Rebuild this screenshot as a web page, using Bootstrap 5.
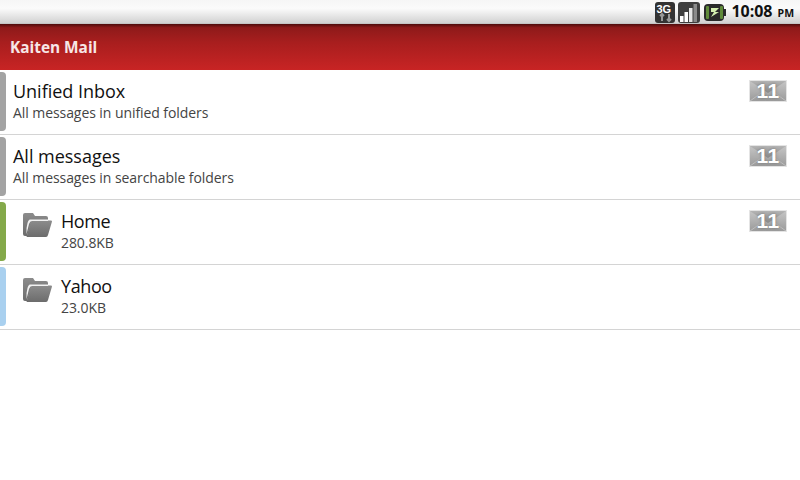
<!DOCTYPE html>
<html lang="en"><head><meta charset="utf-8"><title>Kaiten Mail</title>
<link href="https://cdn.jsdelivr.net/npm/bootstrap@5.3.0/dist/css/bootstrap.min.css" rel="stylesheet">
<style>
html,body{width:800px;height:480px;overflow:hidden;background:#fff;margin:0}
body{font-family:"Open Sans","Noto Sans","Liberation Sans",sans-serif;color:#111}
.statusbar{height:24px;background:linear-gradient(#f6f6f6,#fbfbfb 35%,#d2d2d2 95%,#bbb);padding-right:6px}
.clock{font:700 16px/24px "Open Sans",sans-serif;color:#111;margin-left:2px;white-space:nowrap;letter-spacing:-.03px}
.clock span{font-size:10.5px;margin-left:1px}
.titlebar{height:46px;background:linear-gradient(#4e0c0c 0,#8e1a1a 8%,#a81e1e 40%,#c82424 100%);color:#f7e6e6;font:700 15.4px/47px "Open Sans",sans-serif;padding-left:10px}
.folderrow{height:65px;border-bottom:1px solid #d4d4d4;position:relative}
.chip{width:6px;height:59px;margin-top:2px;border-radius:0 4px 4px 0;flex:none}
.chip-grey{background:#a3a3a3}.chip-green{background:#84a94a}.chip-blue{background:#a9d0ef}
.ftitle{font-size:18px;line-height:24px;color:#111;letter-spacing:-.02px}
.fsub{font-size:14px;line-height:18px;color:#444;padding-top:1px;letter-spacing:-.07px}
.ftext{padding-left:7px;padding-top:9px}
.ftext-indent{padding-left:55px}
.ftitle-narrow{letter-spacing:-.4px}
.folderico{left:22px;top:11px}
.countbadge{right:13px;top:10px;width:38px;height:22px}
.countbadge svg{display:block}
.countbadge b{font:700 21px/22px "Liberation Sans",sans-serif;color:#fff;text-shadow:0 0 3px #777;left:0;right:0;top:0;text-align:center;position:absolute;letter-spacing:.5px}
.stat-ico{gap:3px}
.batt{margin-left:1px}
</style></head><body>
<svg width="0" height="0" class="position-absolute"><defs>
<linearGradient id="envg" x1="0" y1="0" x2="0" y2="1"><stop offset="0" stop-color="#c6c6c6"/><stop offset="1" stop-color="#9a9a9a"/></linearGradient>
<linearGradient id="envf" x1="0" y1="0" x2="0" y2="1"><stop offset="0" stop-color="#b4b4b4"/><stop offset="1" stop-color="#888"/></linearGradient>
<linearGradient id="fold" x1="0" y1="0" x2="0" y2="1"><stop offset="0" stop-color="#8c8c8c"/><stop offset="1" stop-color="#6c6c6c"/></linearGradient>
<symbol id="env" viewBox="0 0 38 22"><rect x=".5" y=".5" width="37" height="21" fill="url(#envg)" stroke="#e4e4e4"/><path d="M1 1l18 12L37 1z" fill="url(#envf)"/><path d="M1 21l14-10M37 21L23 11" stroke="#bdbdbd" fill="none"/></symbol>
<symbol id="fld" viewBox="0 0 30 26"><path d="M1 3q0-2 2-2h8l2 3h11q2 0 2 2v2H10L5 24H3q-2 0-2-2z" fill="url(#fold)"/><path d="M9 8.500h20q1 0 1 1l-4 13.500q-.5 2-2 2H4.500z" fill="url(#fold)"/><path d="M8 7.500h18v1.500H10q-2 0-3 3l-2.500 10q-.5-6 1-11q1-3.500 2.500-3.500z" fill="#f2f2f2"/></symbol>
</defs></svg>
<div class="statusbar d-flex align-items-center justify-content-end stat-ico">
<svg width="20" height="21" viewBox="0 0 20 21"><rect width="20" height="21" rx="3" fill="#333"/><text x="1.500" y="10.500" font-family="Liberation Sans" font-size="11" font-weight="700" fill="#fff">3G</text><path d="M7 12v7M5 14l2-2 2 2" stroke="#9a9a9a" stroke-width="2" fill="none"/><path d="M14 12v7M12 17l2 2 2-2" stroke="#9a9a9a" stroke-width="2" fill="none"/></svg>
<svg width="22" height="21" viewBox="0 0 22 21"><rect width="22" height="21" rx="3" fill="#3f3f3f"/><rect x="2" y="14" width="3.500" height="6" fill="#fff"/><rect x="6.500" y="10" width="3.500" height="10" fill="#fff"/><rect x="11" y="6" width="3.500" height="14" fill="#e6e6e6"/><rect x="15.500" y="2" width="3.500" height="18" fill="#8b8b8b"/></svg>
<svg class="batt" width="22" height="17" viewBox="0 0 22 17"><rect x="0" y="0" width="20" height="17" rx="4" fill="#2a2a2a"/><rect x="20" y="5" width="2" height="7" fill="#2a2a2a"/><rect x="2" y="2" width="3" height="13" rx="1" fill="#5f8a3a"/><rect x="16" y="2" width="3" height="13" rx="1" fill="#5f8a3a"/><path d="M7 4h8l-4 4h4l-8 5 3-5H7z" fill="#d4f0b0"/></svg>
<div class="clock">10:08 <span>PM</span></div>
</div>
<div class="titlebar">Kaiten Mail</div>
<div class="folderrow d-flex">
<div class="chip chip-grey"></div>
<div class="ftext"><div class="ftitle">Unified Inbox</div><div class="fsub">All messages in unified folders</div></div>
<div class="countbadge position-absolute"><svg width="38" height="22"><use href="#env"/></svg><b>11</b></div>
</div>
<div class="folderrow d-flex">
<div class="chip chip-grey"></div>
<div class="ftext"><div class="ftitle">All messages</div><div class="fsub">All messages in searchable folders</div></div>
<div class="countbadge position-absolute"><svg width="38" height="22"><use href="#env"/></svg><b>11</b></div>
</div>
<div class="folderrow d-flex">
<div class="chip chip-green"></div>
<div class="folderico position-absolute"><svg width="30" height="26"><use href="#fld"/></svg></div>
<div class="ftext ftext-indent"><div class="ftitle ftitle-narrow">Home</div><div class="fsub">280.8KB</div></div>
<div class="countbadge position-absolute"><svg width="38" height="22"><use href="#env"/></svg><b>11</b></div>
</div>
<div class="folderrow d-flex">
<div class="chip chip-blue"></div>
<div class="folderico position-absolute"><svg width="30" height="26"><use href="#fld"/></svg></div>
<div class="ftext ftext-indent"><div class="ftitle ftitle-narrow">Yahoo</div><div class="fsub">23.0KB</div></div>
</div>
<script src="https://cdn.jsdelivr.net/npm/bootstrap@5.3.0/dist/js/bootstrap.bundle.min.js"></script>
</body></html>
